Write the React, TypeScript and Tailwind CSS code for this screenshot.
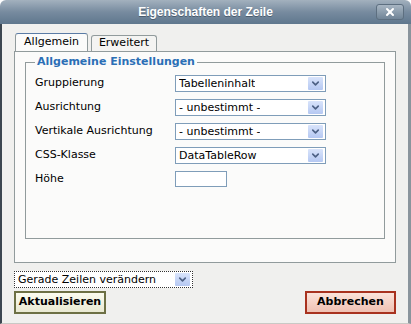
import { ChevronDown, X } from "lucide-react";

const rows = [
  { label: "Gruppierung", value: "Tabelleninhalt" },
  { label: "Ausrichtung", value: "- unbestimmt -" },
  { label: "Vertikale Ausrichtung", value: "- unbestimmt -" },
  { label: "CSS-Klasse", value: "DataTableRow" },
];

function FakeSelect({ value, width, dotted }: { value: string; width: string; dotted?: boolean }) {
  return (
    <div
      className={`flex h-[17px] items-center justify-between bg-white pl-[3px] pr-[2px] ${width} ${
        dotted ? "border border-dotted border-[#333]" : "border border-[#7f9db9]"
      }`}
    >
      <span className="truncate leading-none">{value}</span>
      <span className="flex h-[13px] w-[15px] items-center justify-center rounded-[1px] bg-gradient-to-b from-[#d9e4fb] to-[#b5c8f2] text-[#4d6185]">
        <ChevronDown size={11} strokeWidth={3.5} />
      </span>
    </div>
  );
}

export default function App() {
  return (
    <div className="h-[324px] w-[411px] overflow-hidden bg-white font-['DejaVu_Sans',Verdana,sans-serif] text-[11px] text-black">
      <div className="flex h-full flex-col">
        <div className="relative flex h-[24px] shrink-0 items-center justify-center rounded-t-[6px] bg-gradient-to-b from-[#a3b1be] via-[#778b9f] to-[#5f778d]">
          <span className="font-['Liberation_Sans',Arial,sans-serif] text-[12px] font-bold text-white [text-shadow:0_1px_0_#4a5c6e]">
            Eigenschaften der Zeile
          </span>
          <span className="absolute right-[7px] top-[4px] flex h-[16px] w-[28px] items-center justify-center rounded-[3px] border border-[#5d6f80] bg-gradient-to-b from-[#a8b6c3] to-[#718597] text-white">
            <X size={12} strokeWidth={4} />
          </span>
        </div>
        <div className="flex flex-1 flex-col border-l-2 border-r-[3px] border-b border-l-[#3c4650] border-r-[#8a949c] border-b-[#c9c9c5] bg-[#f0f0ee] px-[12px] pt-[9px]">
          <div className="flex items-end gap-[3px] pl-[1px]">
            <div className="flex h-[18px] w-[73px] items-center justify-center rounded-t-[3px] border border-b-0 border-[#919b9c] border-t-[#5a7ba5] bg-[#fbfbfa]">
              Allgemein
            </div>
            <div className="flex h-[16px] w-[66px] items-center justify-center rounded-t-[3px] border border-b-0 border-[#919b9c] bg-[#f4f4f2]">
              Erweitert
            </div>
          </div>
          <div className="h-[212px] border border-[#919b9c] bg-[#fbfbfa] px-[10px] pt-[2px]">
            <fieldset className="h-[185px] border border-[#919b9c] px-[9px] pt-[4px]">
              <legend className="px-[2px] font-bold text-[#2b6fb6]">Allgemeine Einstellungen</legend>
              <div className="flex flex-col gap-[7px]">
                {rows.map((row) => (
                  <div key={row.label} className="flex items-center">
                    <span className="w-[140px]">{row.label}</span>
                    <FakeSelect value={row.value} width="w-[151px]" />
                  </div>
                ))}
                <div className="flex items-center">
                  <span className="w-[140px]">Höhe</span>
                  <div className="h-[16px] w-[52px] border border-[#7f9db9] bg-white" />
                </div>
              </div>
            </fieldset>
          </div>
          <div className="mt-[8px]">
            <FakeSelect value="Gerade Zeilen verändern" width="w-[179px]" dotted />
          </div>
          <div className="mt-[3px] flex justify-between">
            <button className="h-[23px] w-[92px] border-2 border-[#6d7044] bg-gradient-to-b from-[#fbfbef] to-[#e9e9d2] font-bold">
              Aktualisieren
            </button>
            <button className="h-[23px] w-[91px] border-2 border-[#a8321f] bg-gradient-to-b from-[#fbe3da] to-[#efc1b3] font-bold">
              Abbrechen
            </button>
          </div>
        </div>
      </div>
    </div>
  );
}
